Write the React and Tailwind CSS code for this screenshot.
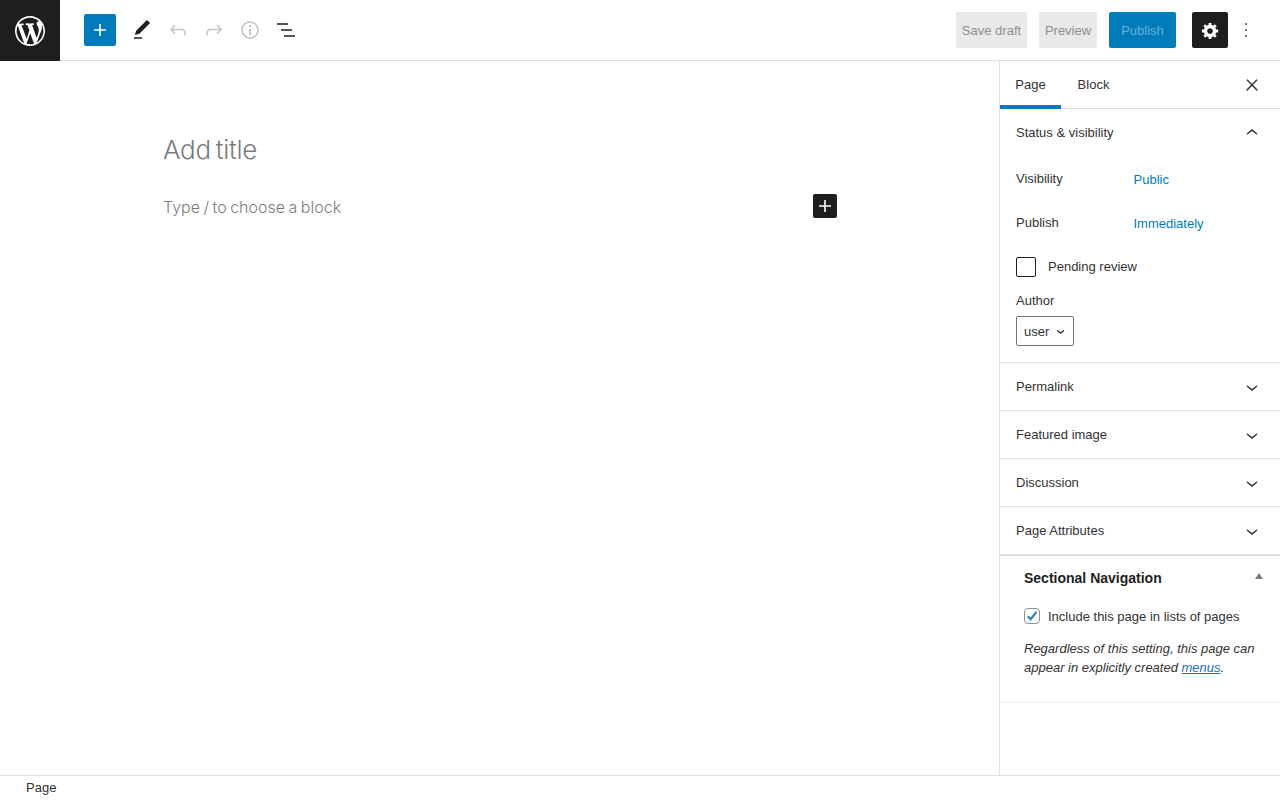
import React from 'react';

const Icon = ({ d, className = '', size = 24, box = 24 }) => (
  <svg width={size} height={size} viewBox={`0 0 ${box} ${box}`} fill="currentColor" className={`shrink-0 ${className}`} aria-hidden>
    <path d={d} />
  </svg>
);

const icons = {
  wp: 'M20 10c0-5.51-4.49-10-10-10C4.48 0 0 4.49 0 10c0 5.52 4.48 10 10 10 5.51 0 10-4.48 10-10zM7.78 15.37L4.37 6.22c.55-.02 1.17-.08 1.17-.08.5-.06.44-1.13-.06-1.11 0 0-1.45.11-2.37.11-.18 0-.37 0-.58-.01C4.12 2.69 6.87 1.11 10 1.11c2.33 0 4.45.87 6.05 2.34-.68-.11-1.65.39-1.65 1.58 0 .74.45 1.36.9 2.1.35.61.55 1.36.55 2.46 0 1.49-1.4 5-1.4 5l-3.03-8.37c.54-.02.82-.17.82-.17.5-.05.44-1.25-.06-1.22 0 0-1.44.12-2.38.12-.87 0-2.33-.12-2.33-.12-.5-.03-.56 1.2-.06 1.22l.92.08 1.26 3.41zM17.41 10c.24-.64.74-1.87.43-4.25.7 1.29 1.05 2.71 1.05 4.25 0 3.29-1.73 6.24-4.4 7.78.97-2.59 1.94-5.2 2.92-7.78zM6.1 18.09C3.12 16.65 1.11 13.53 1.11 10c0-1.3.23-2.48.72-3.59C3.25 10.3 4.67 14.2 6.1 18.09zm4.03-6.63l2.58 6.98c-.86.29-1.76.45-2.71.45-.79 0-1.57-.11-2.29-.33.81-2.38 1.62-4.74 2.42-7.1z',
  plus: 'M18 11.2h-5.2V6h-1.6v5.2H6v1.6h5.2V18h1.6v-5.2H18z',
  edit: 'M20.1 5.1L16.9 2 6.2 12.7l-1.3 4.4 4.5-1.3L20.1 5.1zM4 20.8h8v-1.5H4v1.5z',
  undo: 'M18.3 11.7c-.6-.6-1.4-.9-2.3-.9H6.7l2.9-3.3-1.1-1-4.5 5L8.5 16l1-1-2.7-2.7H16c.5 0 .9.2 1.3.5 1 1 1 3.4 1 4.5v.3h1.5v-.2c0-1.5 0-4.3-1.5-5.7z',
  redo: 'M15.6 6.5l-1.1 1 2.9 3.3H8c-.9 0-1.7.3-2.3.9-1.4 1.5-1.4 4.2-1.4 5.6v.2h1.5v-.3c0-1.1 0-3.5 1-4.5.3-.3.7-.5 1.3-.5h9.2L14.5 15l1.1 1.1 4.6-4.6-4.6-5z',
  info: 'M12 3.2c-4.8 0-8.8 3.9-8.8 8.8 0 4.8 3.9 8.8 8.8 8.8 4.8 0 8.8-3.9 8.8-8.8 0-4.8-4-8.8-8.8-8.8zm0 16c-4 0-7.2-3.3-7.2-7.2C4.8 8 8 4.8 12 4.8s7.2 3.3 7.2 7.2c0 4-3.2 7.2-7.2 7.2zM11 17h2v-6h-2v6zm0-8h2V7h-2v2z',
  list: 'M3 5.2h11v1.6H3zM7 11.2h11v1.6H7zM10 17.2h11v1.6H10z',
  cog: 'M18 12h-2.18c-.17.7-.44 1.35-.81 1.93l1.54 1.54-2.1 2.1-1.54-1.54c-.58.36-1.23.63-1.91.79V19H8v-2.18c-.68-.16-1.33-.43-1.91-.79l-1.54 1.54-2.12-2.12 1.54-1.54c-.36-.58-.63-1.23-.79-1.91H1V9.03h2.17c.16-.7.44-1.35.8-1.94L2.43 5.55l2.1-2.1 1.54 1.54c.58-.37 1.24-.64 1.93-.81V2h3v2.18c.68.16 1.33.43 1.91.79l1.54-1.54 2.12 2.12-1.54 1.54c.36.59.64 1.24.8 1.94H18V12zm-8.5 1.5c1.66 0 3-1.34 3-3s-1.34-3-3-3-3 1.34-3 3 1.34 3 3 3z',
  more: 'M12.8 6.8h-1.6V5.2h1.6zM12.8 12.8h-1.6v-1.6h1.6zM12.8 18.8h-1.6v-1.6h1.6z',
  close: 'M13 11.8l6.1-6.3-1-1-6.1 6.2-6.1-6.2-1 1 6.1 6.3-6.5 6.7 1 1 6.5-6.6 6.5 6.6 1-1z',
  up: 'M6.5 12.4L12 8l5.5 4.4-.9 1.2L12 10l-4.5 3.6-1-1.2z',
  down: 'M17.5 11.6L12 16l-5.5-4.4.9-1.2L12 14l4.5-3.6 1 1.2z',
};

function CollapsedPanel({ title }) {
  return (
    <div className="flex h-[48px] items-center justify-between border-b border-[#e0e0e0] pl-4 pr-4">
      <span>{title}</span>
      <Icon d={icons.down} className="mt-px" />
    </div>
  );
}

export default function App() {
  return (
    <div className="flex h-[800px] w-[1280px] flex-col overflow-hidden bg-white text-[13px] text-[#333333] font-['Liberation_Sans',Arial,sans-serif]">
      {/* Top bar */}
      <header className="flex h-[61px] shrink-0 items-stretch border-b border-[#e0e0e0]">
        <div className="-mb-px flex w-[60px] items-center justify-center bg-[#1e1e1e] pt-px text-white">
          <Icon d={icons.wp} size={30} box={20} />
        </div>
        <div className="ml-6 flex items-center">
          <button className="flex h-8 w-8 items-center justify-center rounded-[2px] bg-[#007cba] text-white">
            <Icon d={icons.plus} />
          </button>
          <div className="ml-[14px] flex items-center gap-3">
            <Icon d={icons.edit} className="text-[#1e1e1e]" />
            <Icon d={icons.undo} className="text-[#c4c4c4]" />
            <Icon d={icons.redo} className="text-[#c4c4c4]" />
            <Icon d={icons.info} className="text-[#c4c4c4]" />
            <Icon d={icons.list} className="text-[#1e1e1e]" />
          </div>
        </div>
        <div className="ml-auto flex items-center pr-[22px]">
          <button className="flex h-9 w-[71px] items-center justify-center rounded-[2px] bg-[#e9e9e9] pt-px text-[#8f8f8f]">Save draft</button>
          <button className="ml-3 flex h-9 w-[58px] items-center justify-center rounded-[2px] bg-[#e9e9e9] pt-px text-[#8f8f8f]">Preview</button>
          <button className="ml-3 flex h-9 w-[67px] items-center justify-center rounded-[2px] bg-[#007cba] pt-px text-[#66b0d6]">Publish</button>
          <button className="ml-4 flex h-9 w-9 items-center justify-center rounded-[2px] bg-[#1e1e1e] text-white">
            <Icon d={icons.cog} size={19} box={20} />
          </button>
          <Icon d={icons.more} className="ml-[6px] text-[#1e1e1e]" />
        </div>
      </header>

      <div className="flex min-h-0 flex-1">
        {/* Editor canvas */}
        <main className="flex-1 pl-[163px] pr-[162px] pt-[72px]">
          <h1 className="text-[26px] leading-[34px] font-light tracking-[-0.3px] [word-spacing:-2px] text-[#7c7c7c] font-['Inter',sans-serif]">Add title</h1>
          <div className="mt-[27px] flex h-6 items-center justify-between">
            <p className="pt-px text-[16px] font-light [word-spacing:-1px] text-[#7c7c7c] font-['Inter',sans-serif]">Type / to choose a block</p>
            <button className="flex h-6 w-6 items-center justify-center rounded-[2px] bg-[#1e1e1e] text-white">
              <Icon d={icons.plus} />
            </button>
          </div>
        </main>

        {/* Settings sidebar */}
        <aside className="w-[281px] shrink-0 border-l border-[#e0e0e0]">
          <div className="flex h-[48px] items-stretch border-b border-[#e0e0e0]">
            <div className="-mb-px flex w-[61px] items-center justify-center border-b-[4px] border-[#007cba] pt-[3px]">Page</div>
            <div className="flex w-[65px] items-center justify-center">Block</div>
            <div className="ml-auto flex items-center pr-[19px]">
              <Icon d={icons.close} size={18} className="stroke-current stroke-[0.6px]" />
            </div>
          </div>

          <section className="border-b border-[#e0e0e0] px-4 pb-4">
            <div className="flex h-[47px] items-center justify-between">
              <span>Status &amp; visibility</span>
              <Icon d={icons.up} />
            </div>
            <div className="flex h-[44px] items-center pt-[2px]">
              <span className="w-[117.5px]">Visibility</span>
              <span className="pt-[2px] text-[#007cba]">Public</span>
            </div>
            <div className="flex h-[44px] items-center pt-[2px]">
              <span className="w-[117.5px]">Publish</span>
              <span className="pt-[2px] text-[#007cba]">Immediately</span>
            </div>
            <div className="mt-[13px] flex items-center">
              <span className="h-5 w-5 rounded-[2px] border border-[#1e1e1e] bg-white" />
              <span className="ml-3">Pending review</span>
            </div>
            <div className="mt-4 leading-4">Author</div>
            <div className="mt-[7px] flex h-[30px] w-[58px] items-center rounded-[2px] border border-[#757575] pl-[7px]">
              <span className="pt-px">user</span>
              <svg width="9" height="6" viewBox="0 0 9 6" fill="none" stroke="#1e1e1e" strokeWidth="1.2" className="ml-[7px] mt-[2px]" aria-hidden>
                <path d="M1 1.5l3.5 2.5 3.5-2.5" />
              </svg>
            </div>
          </section>

          <CollapsedPanel title="Permalink" />
          <CollapsedPanel title="Featured image" />
          <CollapsedPanel title="Discussion" />
          <CollapsedPanel title="Page Attributes" />

          {/* Plugin meta box */}
          <section className="h-[148px] border-y border-t-[#e0e0e0] border-b-[#f0f0f0] px-6 pt-[14px]">
            <div className="flex items-center justify-between">
              <h2 className="text-[14px] font-bold leading-4 text-[#1e1e1e]">Sectional Navigation</h2>
              <span className="-mr-[7px] mb-[4px] h-0 w-0 border-x-[4px] border-b-[6px] border-x-transparent border-b-[#787c82]" />
            </div>
            <label className="mt-5 flex items-center">
              <span className="flex h-4 w-4 items-center justify-center rounded-[4px] border border-[#8c8f94]">
                <svg width="12" height="12" viewBox="0 0 12 12" fill="none" stroke="#3582c4" strokeWidth="2.2" aria-hidden>
                  <path d="M1.8 6.3l2.8 3L10.4 2" />
                </svg>
              </span>
              <span className="ml-2 pt-px">Include this page in lists of pages</span>
            </label>
            <p className="mt-3 italic leading-[19px]">
              Regardless of this setting, this page can appear in explicitly created <a className="text-[#2271b1] underline">menus</a>.
            </p>
          </section>
        </aside>
      </div>

      {/* Breadcrumb footer */}
      <footer className="flex h-[25px] shrink-0 items-center border-t border-[#e0e0e0] pl-[26px]">Page</footer>
    </div>
  );
}
